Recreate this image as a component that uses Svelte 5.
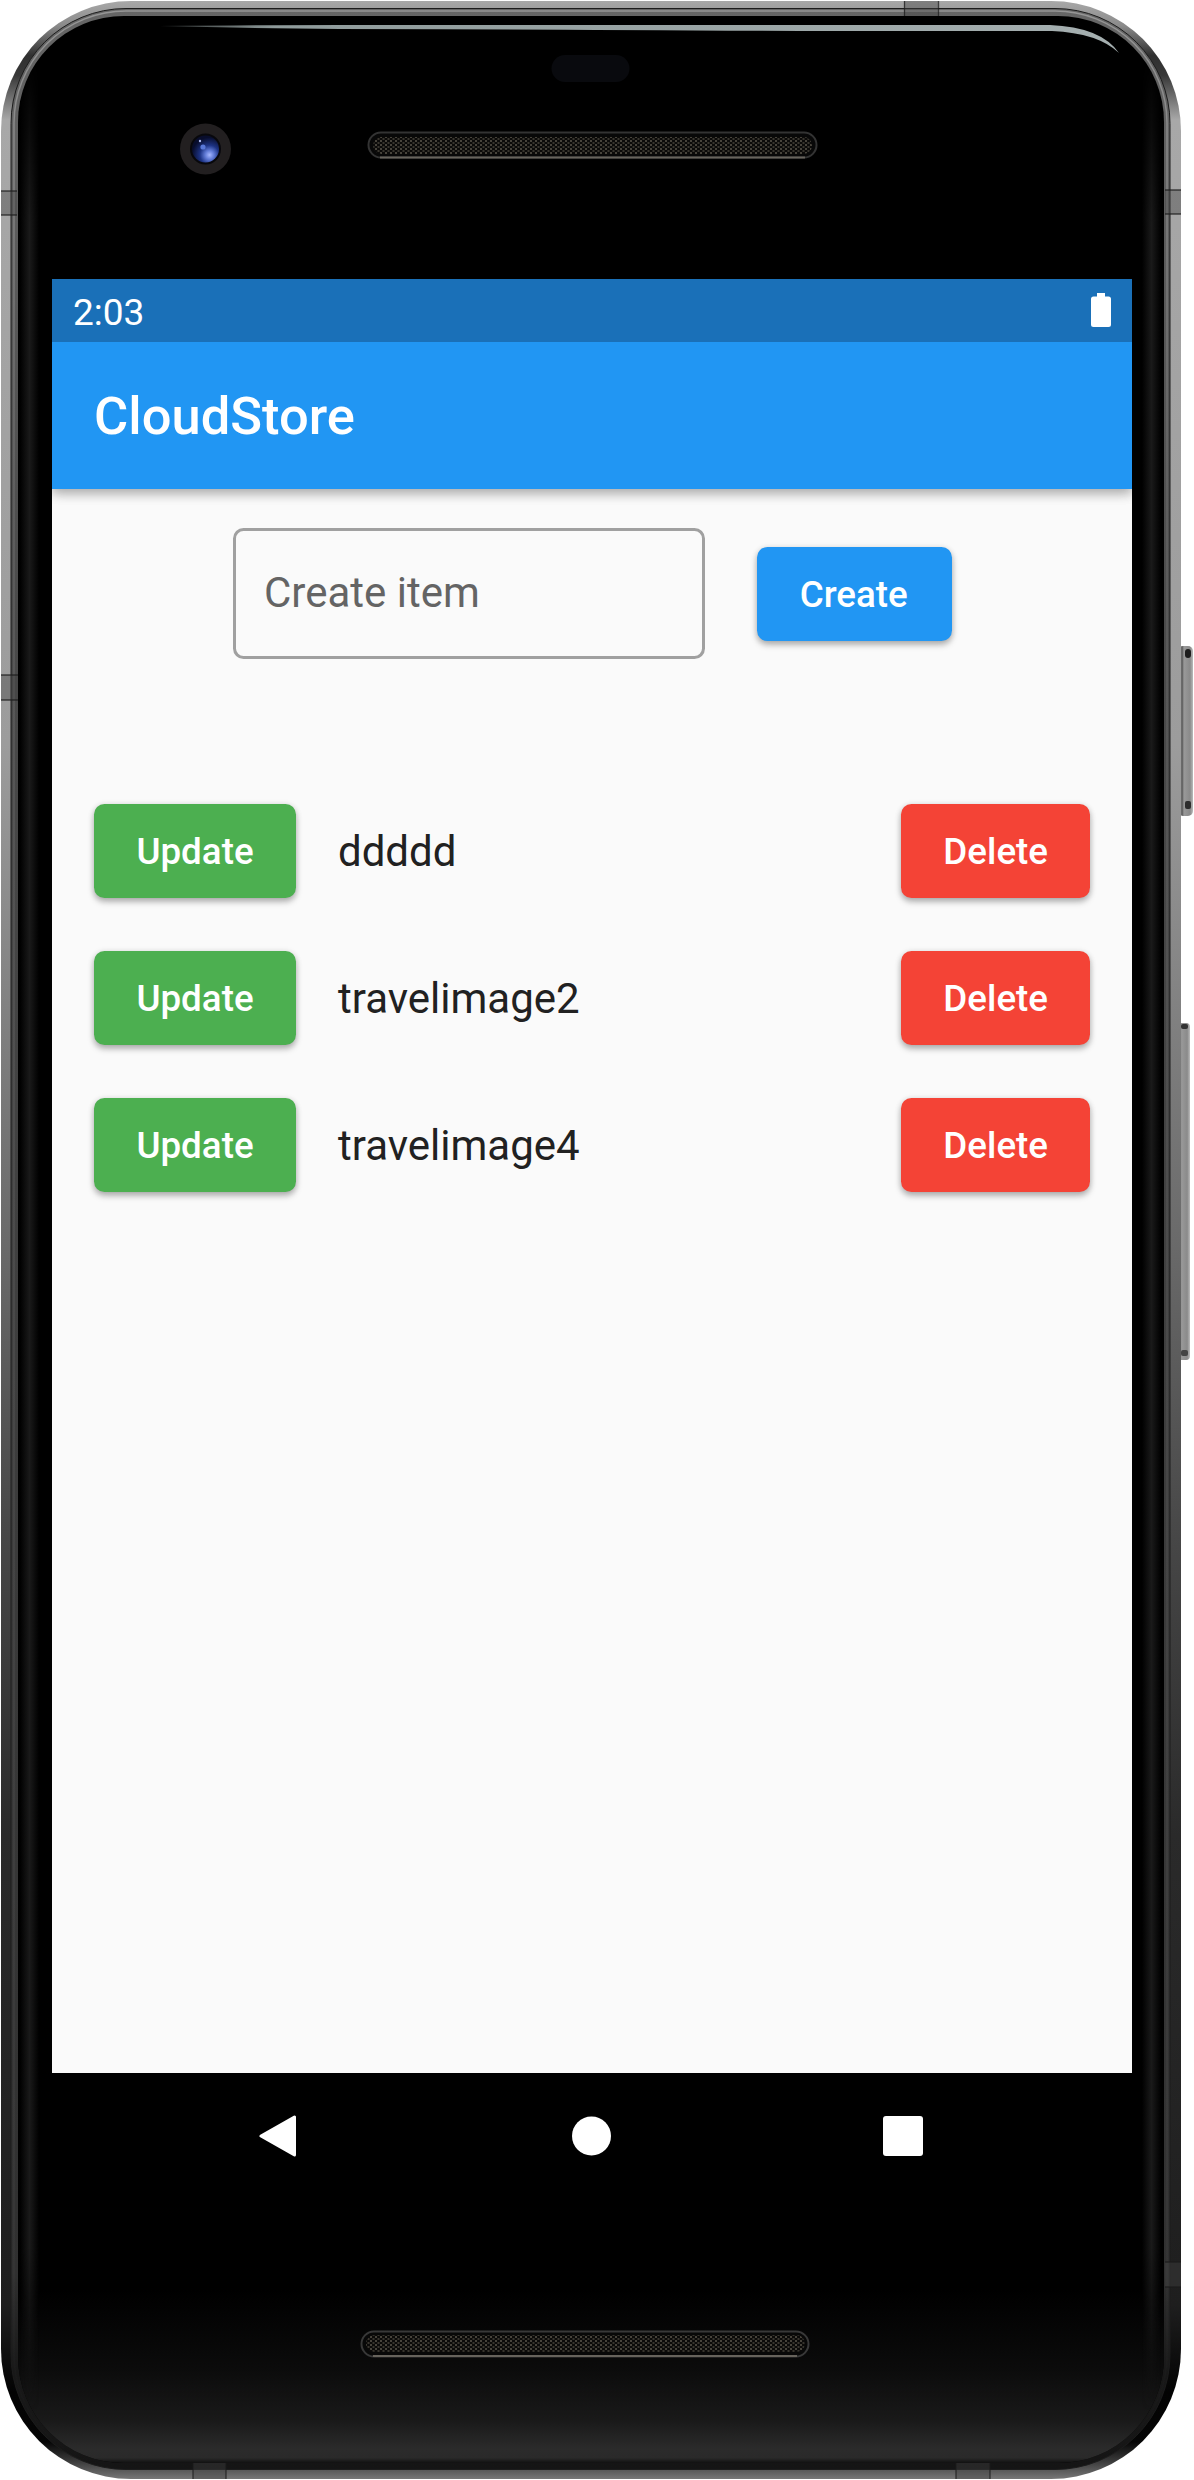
<script>
  let draft = $state('');
  let items = $state(['ddddd', 'travelimage2', 'travelimage4']);

  function create() {
    const name = draft.trim();
    if (!name) return;
    items.push(name);
    draft = '';
  }

  function update(index) {
    if (draft.trim()) items[index] = draft.trim();
  }

  function remove(index) {
    items.splice(index, 1);
  }
</script>

<div class="phone">
  <svg class="shell" viewBox="0 0 1194 2480" aria-hidden="true">
    <defs>
      <linearGradient id="rim" x1="0" y1="0" x2="0" y2="1">
        <stop offset="0" stop-color="#a8a8a8" />
        <stop offset=".01" stop-color="#8a8a8a" />
        <stop offset=".022" stop-color="#303030" />
        <stop offset=".03" stop-color="#383838" />
        <stop offset=".048" stop-color="#a8a8a8" />
        <stop offset=".3" stop-color="#9c9c9c" />
        <stop offset=".5" stop-color="#6a6a6a" />
        <stop offset=".62" stop-color="#474747" />
        <stop offset=".74" stop-color="#2a2a2a" />
        <stop offset=".93" stop-color="#1e1e1e" />
        <stop offset=".965" stop-color="#030303" />
        <stop offset=".985" stop-color="#050505" />
        <stop offset=".993" stop-color="#3c3c3c" />
        <stop offset="1" stop-color="#777" />
      </linearGradient>
      <linearGradient id="bevel" x1="0" y1="0" x2="0" y2="1">
        <stop offset="0" stop-color="#666" />
        <stop offset=".25" stop-color="#4a4a4a" />
        <stop offset=".6" stop-color="#3c3c3c" />
        <stop offset=".92" stop-color="#303030" />
        <stop offset=".96" stop-color="#181818" />
        <stop offset="1" stop-color="#151515" />
      </linearGradient>
      <linearGradient id="glint" x1="0" y1="0" x2="0" y2="1">
        <stop offset="0" stop-color="#aaa" stop-opacity=".7" />
        <stop offset=".2" stop-color="#888" stop-opacity=".35" />
        <stop offset=".9" stop-color="#666" stop-opacity=".15" />
        <stop offset="1" stop-color="#333" stop-opacity="0" />
      </linearGradient>
      <linearGradient id="edge">
        <stop offset="0" stop-color="#1a1a1a" stop-opacity="0" />
        <stop offset=".5" stop-color="#1a1a1a" />
        <stop offset="1" stop-color="#1a1a1a" stop-opacity="0" />
      </linearGradient>
      <linearGradient id="fade" x1="0" y1="0" x2="0" y2="1">
        <stop offset="0" stop-color="#000" />
        <stop offset=".07" stop-color="#fff" />
        <stop offset=".93" stop-color="#fff" />
        <stop offset="1" stop-color="#000" />
      </linearGradient>
      <mask id="edgeFade"><rect x="0" y="60" width="1194" height="2350" fill="url(#fade)" /></mask>
      <linearGradient id="chin" x1="0" y1="0" x2="0" y2="1">
        <stop offset="0" stop-color="#000" />
        <stop offset=".45" stop-color="#0b0b0b" />
        <stop offset=".75" stop-color="#191919" />
        <stop offset=".92" stop-color="#2b2b2b" />
        <stop offset=".97" stop-color="#2a2a2a" />
        <stop offset="1" stop-color="#111" />
      </linearGradient>
      <linearGradient id="shine">
        <stop offset="0" stop-color="#8f9b9b" stop-opacity=".3" />
        <stop offset=".12" stop-color="#8f9b9b" />
        <stop offset="1" stop-color="#a5afb0" />
      </linearGradient>
      <linearGradient id="key">
        <stop offset="0" stop-color="#777" />
        <stop offset=".3" stop-color="#666" />
        <stop offset=".4" stop-color="#999" />
        <stop offset=".8" stop-color="#8a8a8a" />
        <stop offset="1" stop-color="#bbb" />
      </linearGradient>
      <radialGradient id="lens" cx=".65" cy=".72" r=".65">
        <stop offset="0" stop-color="#a7b8ff" />
        <stop offset=".25" stop-color="#617bd6" />
        <stop offset=".55" stop-color="#1d3384" />
        <stop offset="1" stop-color="#080d2c" />
      </radialGradient>
      <pattern id="mesh" width="5" height="4" patternUnits="userSpaceOnUse">
        <rect width="5" height="4" fill="#0b0a09" />
        <rect width="2" height="2" fill="#47433b" />
        <rect x="2.5" y="2" width="2" height="2" fill="#38352e" />
      </pattern>
      <clipPath id="glass"><rect x="18" y="16" width="1146" height="2447" rx="106" /></clipPath>
    </defs>

    <!-- side keys -->
    <g>
      <rect x="1178" y="646" width="15" height="170" rx="5" fill="url(#key)" />
      <rect x="1185" y="649" width="6" height="9" rx="3" fill="#1c1c1c" />
      <rect x="1185" y="801" width="6" height="8" rx="2" fill="#2c2c2c" />
      <rect x="1176" y="1023" width="14" height="337" rx="4" fill="url(#key)" />
      <rect x="1181" y="1024" width="7" height="5" rx="2" fill="#333" />
      <rect x="1181" y="1350" width="7" height="6" rx="2" fill="#444" />
    </g>

    <!-- metal frame -->
    <rect x="1" y="1" width="1180" height="2478" rx="130" fill="url(#rim)" />
    <rect x="11" y="8.5" width="1159" height="2461" rx="115" fill="url(#bevel)" stroke="#1c1c1c" />
    <rect x="14" y="11" width="1153" height="2456" rx="112" fill="none" stroke="url(#glint)" stroke-width="1.5" />

    <!-- antenna bands -->
    <g fill="#444" fill-opacity=".4">
      <path d="M1 191h16v24H1zM1165 190h16v24h-16zM1 675h17v25H1zM904 1h34v15h-34zM1165 2262h16v25h-16zM193 2463h33v16h-33zM956 2463h34v16h-34z" />
      <path
        d="M1 191h16M1 215h16M1165 190h16M1165 214h16M1 675h17M1 700h17M904.500 1v15M938.500 1v15M1165 2262h16M1165 2287h16M193 2463v16M226 2463v16M956 2463v16M990 2463v16"
        stroke="#1c1c1c"
        stroke-opacity=".75"
        stroke-width="1.300"
      />
    </g>

    <g clip-path="url(#glass)">
      <rect x="18" y="16" width="1146" height="2448" fill="#000" />
      <rect x="18" y="2290" width="1146" height="173" fill="url(#chin)" />
      <g mask="url(#edgeFade)">
        <rect x="20" y="60" width="19" height="2350" fill="url(#edge)" />
        <rect x="1142" y="60" width="19" height="2350" fill="url(#edge)" />
      </g>
    </g>
    <path d="M160 26 Q260 25 340 25 H1050 Q1101 27 1119 53 Q1098 33 1052 31 H800 Q500 29 340 29 Q240 28 160 26Z" fill="url(#shine)" />

    <!-- camera, sensor, speakers -->
    <circle cx="205.5" cy="149" r="25.5" fill="#221f20" />
    <circle cx="205.5" cy="149" r="15.5" fill="#08080c" />
    <circle cx="205.5" cy="149" r="13.5" fill="url(#lens)" />
    <circle cx="203" cy="147" r="2.6" fill="#5978d8" />
    <circle cx="200" cy="141" r="1.2" fill="#aab8ef" />
    <rect x="551.5" y="55" width="78" height="27" rx="13.5" fill="#090a0e" />
    <g stroke-width="2">
      <rect x="368.5" y="132.5" width="448" height="25" rx="12.5" fill="#080808" stroke="#333" />
      <rect x="373" y="137" width="439" height="17" rx="8.5" fill="url(#mesh)" />
      <path d="M380 157.5H805" stroke="#67635c" />
      <rect x="361.5" y="2331.5" width="447" height="25" rx="12.5" fill="#080808" stroke="#383838" />
      <rect x="366" y="2335" width="439" height="17" rx="8.5" fill="url(#mesh)" />
      <path d="M373 2356H797" stroke="#67635c" />
    </g>
  </svg>

  <main class="screen">
    <header class="status">
      <span>2:03</span>
      <svg class="battery" viewBox="0 0 20 34" aria-hidden="true">
        <path d="M6 0h8v3.500h3.500a2.500 2.500 0 0 1 2.500 2.500v25.500a2.500 2.500 0 0 1-2.500 2.500h-15A2.500 2.500 0 0 1 0 31.500V6a2.500 2.500 0 0 1 2.500-2.500H6z" fill="#fff" />
      </svg>
    </header>

    <div class="appbar"><h1>CloudStore</h1></div>

    <section class="body">
      <div class="form">
        <input placeholder="Create item" aria-label="Create item" bind:value={draft} />
        <button class="create" onclick={create}>Create</button>
      </div>

      <ul class="list">
        {#each items as item, i}
          <li>
            <button class="update" onclick={() => update(i)}>Update</button>
            <span class="name">{item}</span>
            <button class="delete" onclick={() => remove(i)}>Delete</button>
          </li>
        {/each}
      </ul>
    </section>

    <nav class="nav" aria-label="System">
      <svg viewBox="0 0 42 42"><path d="M36.500 2v38L3 21z" fill="#fff" stroke="#fff" stroke-width="3" stroke-linejoin="round" /></svg>
      <svg viewBox="0 0 42 42"><circle cx="21.500" cy="21" r="19.500" fill="#fff" /></svg>
      <svg viewBox="0 0 42 42"><rect x="1" y="1" width="40" height="40" rx="3" fill="#fff" /></svg>
    </nav>
  </main>
</div>

<style>
  :global(body) {
    background: #fff;
  }

  .phone {
    position: relative;
    box-sizing: border-box;
    width: 1194px;
    height: 2480px;
    padding: 279px 62px 281px 52px;
    overflow: hidden;
    font-family: Roboto, sans-serif;
  }

  .shell {
    position: absolute;
    inset: 0;
    width: 1194px;
    height: 2480px;
  }

  .screen {
    position: relative;
    display: flex;
    flex-direction: column;
    width: 1080px;
    height: 1920px;
    background: #fafafa;
  }

  .status {
    display: flex;
    align-items: center;
    justify-content: space-between;
    box-sizing: border-box;
    height: 63px;
    padding: 4px 21px 0;
    background: #1a70b8;
    color: #fff;
    font-size: 37px;
    line-height: 59px;
  }

  .battery {
    width: 20px;
    height: 34px;
    margin-bottom: 5px;
  }

  .appbar {
    position: relative;
    display: flex;
    align-items: center;
    box-sizing: border-box;
    height: 147px;
    padding: 1px 0 0 42px;
    background: #2196f3;
    box-shadow: 0 5px 10px rgba(0, 0, 0, 0.22), 0 2px 14px rgba(0, 0, 0, 0.16);
    clip-path: inset(0 0 -40px 0);
  }

  h1 {
    margin: 0;
    color: #fff;
    font-size: 52.5px;
    font-weight: 500;
    line-height: 62px;
  }

  .body {
    flex: 1;
    padding-top: 39px;
  }

  .form {
    display: flex;
    align-items: center;
    justify-content: center;
    gap: 52.5px;
    height: 131.5px;
  }

  input {
    box-sizing: border-box;
    width: 472px;
    height: 131px;
    padding: 0 29px 3px 28.5px;
    border: 3px solid #a0a0a0;
    border-radius: 10.5px;
    background: transparent;
    color: #212121;
    font: 400 42px Roboto, sans-serif;
    outline: 0;
  }

  input::placeholder {
    color: #646464;
    opacity: 1;
  }

  button {
    height: 94.5px;
    padding: 0 42px;
    border: 0;
    border-radius: 10.5px;
    color: #fff;
    font: 500 36.75px Roboto, sans-serif;
    box-shadow: 0 4px 6px rgba(0, 0, 0, 0.25), 0 1px 6px rgba(0, 0, 0, 0.14);
  }

  .create {
    width: 194.5px;
    padding: 1px 42px 0 41px;
    background: #2196f3;
  }

  .update {
    width: 202px;
    padding: 0;
    background: #4caf50;
  }

  .delete {
    background: #f44336;
  }

  .list {
    margin: 118px 0 0;
    padding: 0 42px;
    list-style: none;
  }

  li {
    display: flex;
    align-items: center;
    height: 147px;
  }

  .name {
    flex: 1;
    padding-left: 42px;
    color: #212121;
    font-size: 42px;
    line-height: 49px;
  }

  .nav {
    display: flex;
    align-items: center;
    justify-content: space-between;
    box-sizing: border-box;
    height: 126px;
    padding: 0 208px 0 206px;
    background: #000;
  }

  .nav svg {
    width: 42px;
    height: 42px;
  }
</style>
